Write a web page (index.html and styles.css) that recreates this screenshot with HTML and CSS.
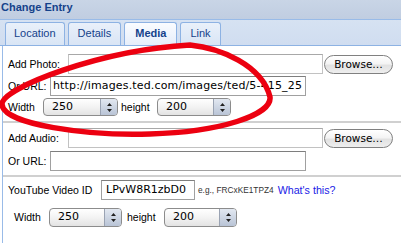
FILE: index.html
```html
<!DOCTYPE html>
<html>
<head>
<meta charset="utf-8">
<link rel="stylesheet" href="styles.css">
</head>
<body>
<div class="header">Change Entry</div>
<div class="tabs">
  <div class="tab">Location</div>
  <div class="tab">Details</div>
  <div class="tab active">Media</div>
  <div class="tab">Link</div>
</div>
<div class="panel">
  <div class="section s1">
    <div class="row">
      <span class="label lw-file">Add Photo:</span>
      <div class="filebox"></div>
      <div class="btn">Browse…</div>
    </div>
    <div class="row gap2">
      <span class="label lw-url">Or URL:</span>
      <div class="input url">http://images.ted.com/images/ted/5-415_25</div>
    </div>
    <div class="row gap2 srow">
      <span class="label lw-width">Width</span>
      <div class="select"><span class="val">250</span><span class="arrows"><svg width="7" height="11" viewBox="0 0 7 11"><path d="M3.5 1 L6 4 L1 4 Z M1 7 L6 7 L3.5 10 Z" fill="#222"/></svg></span></div>
      <span class="label hgt">height</span>
      <div class="select s2w"><span class="val">200</span><span class="arrows"><svg width="7" height="11" viewBox="0 0 7 11"><path d="M3.5 1 L6 4 L1 4 Z M1 7 L6 7 L3.5 10 Z" fill="#222"/></svg></span></div>
    </div>
  </div>
  <div class="section s2">
    <div class="row">
      <span class="label lw-file">Add Audio:</span>
      <div class="filebox"></div>
      <div class="btn">Browse…</div>
    </div>
    <div class="row gap3">
      <span class="label lw-url">Or URL:</span>
      <div class="input url"></div>
    </div>
  </div>
  <div class="section s3">
    <div class="row">
      <span class="label lw-yt">YouTube Video ID</span>
      <div class="input yt">LPvW8R1zbD0</div>
      <span class="hint">e.g., FRCxKE1TPZ4</span>
      <span class="link">What's this?</span>
    </div>
    <div class="row gap8 srow indent">
      <span class="label lw-width">Width</span>
      <div class="select sm"><span class="val">250</span><span class="arrows"><svg width="7" height="11" viewBox="0 0 7 11"><path d="M3.5 1 L6 4 L1 4 Z M1 7 L6 7 L3.5 10 Z" fill="#222"/></svg></span></div>
      <span class="label hgt2">height</span>
      <div class="select sm s2w2"><span class="val">200</span><span class="arrows"><svg width="7" height="11" viewBox="0 0 7 11"><path d="M3.5 1 L6 4 L1 4 Z M1 7 L6 7 L3.5 10 Z" fill="#222"/></svg></span></div>
    </div>
  </div>
</div>
<svg class="mark" width="401" height="243" viewBox="0 0 401 243">
  <path d="M190 45 C220 48, 262 65, 270 97 C272 115, 220 132, 150 134 C90 136, 2 125, 2 104 C2 88, 100 50, 190 45 Z" fill="none" stroke="#ec0010" stroke-width="5.5" stroke-linejoin="round"/>
</svg>
</body>
</html>
```

FILE: styles.css
```css
* { box-sizing: border-box; }
body {
  margin: 0;
  width: 401px;
  height: 243px;
  overflow: hidden;
  background: #fff;
  font-family: "Liberation Sans", Arial, sans-serif;
  position: relative;
}
.header {
  height: 20px;
  background: linear-gradient(#c9d5e6, #c0cde1);
  border-bottom: 1px solid #99bbe8;
  color: #15428b;
  font-weight: bold;
  font-size: 11px;
  line-height: 15px;
  padding-left: 1px;
}
.tabs {
  height: 26px;
  background: linear-gradient(#d6e2f2, #d0ddf0);
  border-bottom: 1px solid #8db2e3;
  display: flex;
  align-items: flex-end;
  padding-left: 5px;
  gap: 3px;
}
.tab {
  height: 23px;
  border: 1px solid #8db2e3;
  border-bottom: none;
  border-radius: 3px 3px 0 0;
  background: linear-gradient(#e9f0fa, #d9e5f5);
  font-size: 11px;
  line-height: 21px;
  color: #15428b;
  padding: 0 9px;
}
.tab:first-child { padding: 0 8px; }
.tab.active {
  background: linear-gradient(#fafcff, #e6eefa);
  font-weight: bold;
  padding: 0 10px;
}
.panel {
  margin-left: 2px;
  border-left: 1px solid #99bbe8;
  height: 197px;
}
.section {
  padding-left: 5px;
  border-bottom: 2px solid #d0d0d0;
}
.s1 { padding-top: 8px; padding-bottom: 5px; }
.s2 { padding-top: 5px; padding-bottom: 4px; }
.s3 { padding-top: 3px; border-bottom: none; }
.row {
  display: flex;
  align-items: center;
  height: 20px;
}
.srow { height: 18px; }
.gap2 { margin-top: 2px; }
.gap3 { margin-top: 3px; }
.gap8 { margin-top: 8px; }
.indent { padding-left: 6px; }
.label {
  font-size: 10.5px;
  color: #000;
  white-space: nowrap;
}
.lw-file { width: 60px; }
.lw-url { width: 42px; }
.lw-width { width: 35px; }
.lw-yt { width: 93px; }
.hgt { margin-left: 3px; width: 36px; }
.hgt2 { margin-left: 5px; width: 36px; }
.filebox {
  width: 255px;
  height: 20px;
  border: 1px solid #c2c2c2;
  border-top-color: #a8a8a8;
  background: #fff;
}
.btn {
  width: 69px;
  height: 19px;
  margin-left: 1px;
  border: 1px solid #808080;
  border-radius: 10px;
  background: linear-gradient(#ffffff 0%, #f4f4f4 45%, #e2e2e2 55%, #eeeeee 100%);
  font-family: "DejaVu Sans", sans-serif;
  font-size: 10.5px;
  line-height: 17px;
  text-align: center;
  color: #000;
}
.input {
  height: 20px;
  border: 1px solid #a0a0a0;
  border-top-color: #7e7e7e;
  background: #fff;
  font-family: "DejaVu Sans", sans-serif;
  font-size: 11px;
  line-height: 18px;
  padding-left: 2px;
  white-space: nowrap;
  overflow: hidden;
  color: #000;
}
.url { width: 256px; letter-spacing: 0.15px; }
.yt { width: 94px; padding-left: 4px; }
.hint {
  font-size: 8.3px;
  color: #333;
  margin-left: 3px;
  white-space: nowrap;
}
.link {
  font-size: 10.7px;
  color: #1a1ae6;
  margin-left: 4px;
  white-space: nowrap;
}
.select {
  display: flex;
  width: 75px;
  height: 18px;
  border: 1px solid #8c8c8c;
  border-radius: 4px;
  background: linear-gradient(#ffffff, #f3f3f3 50%, #e3e3e3);
  overflow: hidden;
}
.s2w { width: 74px; margin-left: 0; }
.sm { width: 73px; height: 19px; }
.s2w2 { margin-left: 1px; }
.val {
  flex: 1;
  padding-left: 8px;
  font-family: "DejaVu Sans", sans-serif;
  font-size: 11px;
  line-height: 16px;
  color: #000;
}
.arrows {
  width: 17px;
  border-left: 1px solid #9aa3b3;
  background: linear-gradient(#e2e8f1, #b9c4d6);
  display: flex;
  align-items: center;
  justify-content: center;
}
.mark {
  position: absolute;
  left: 0;
  top: 0;
  pointer-events: none;
}
```
